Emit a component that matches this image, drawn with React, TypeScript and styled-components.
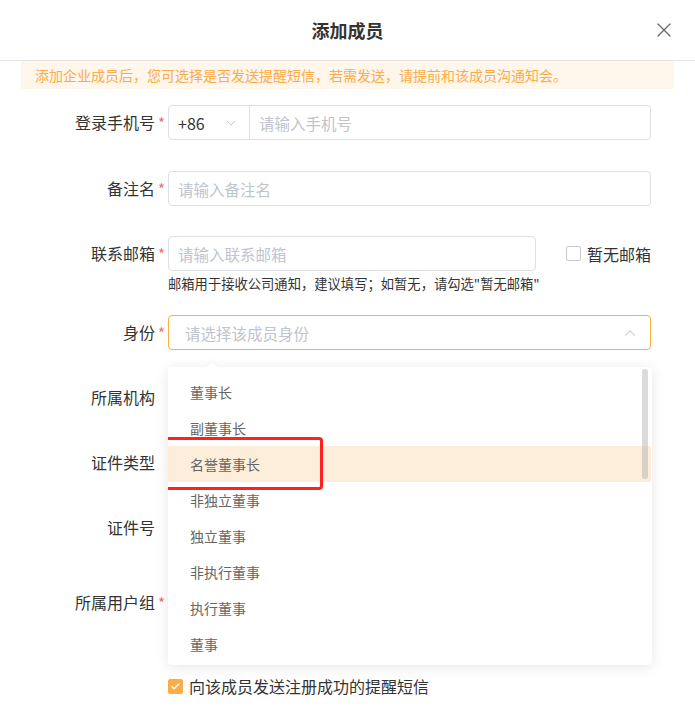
import React from "react";
import styled, { createGlobalStyle } from "styled-components";
import { Check, ChevronDown, ChevronUp, X } from "lucide-react";

const GlobalStyle = createGlobalStyle`
  * { box-sizing: border-box; }
  body {
    margin: 0;
    background: #fff;
    font-family: "Noto Sans CJK SC", "Noto Sans", sans-serif;
    color: #333;
  }
`;

const ROLES = [
  "董事长",
  "副董事长",
  "名誉董事长",
  "非独立董事",
  "独立董事",
  "非执行董事",
  "执行董事",
  "董事",
];

const App = () => {
  return (
    <Dialog>
      <GlobalStyle />
      <Header>
        <span />
        <Title>添加成员</Title>
        <CloseButton aria-label="close">
          <X size={24} strokeWidth={1.3} />
        </CloseButton>
      </Header>
      <Body>
        <Notice>
          添加企业成员后，您可选择是否发送提醒短信，若需发送，请提前和该成员沟通知会。
        </Notice>
        <Form>
          <FormItem $gap={31}>
            <Label $required>登录手机号</Label>
            <Control>
              <PhoneGroup>
                <AreaCode>
                  +86
                  <ChevronDown size={16} strokeWidth={1.4} color="#c0c4cc" />
                </AreaCode>
                <PhoneInput placeholder="请输入手机号" />
              </PhoneGroup>
            </Control>
          </FormItem>

          <FormItem>
            <Label $required>备注名</Label>
            <Control>
              <Input placeholder="请输入备注名" />
            </Control>
          </FormItem>

          <FormItem $gap={22}>
            <Label $required>联系邮箱</Label>
            <Control>
              <InlineRow>
                <Input placeholder="请输入联系邮箱" />
                <CheckLabel>
                  <CheckBox />
                  暂无邮箱
                </CheckLabel>
              </InlineRow>
              <Hint>邮箱用于接收公司通知，建议填写；如暂无，请勾选"暂无邮箱"</Hint>
            </Control>
          </FormItem>

          <FormItem>
            <Label $required>身份</Label>
            <Control>
              <Select $active>
                <Placeholder>请选择该成员身份</Placeholder>
                <ChevronUp size={18} strokeWidth={1.4} color="#c0c4cc" />
              </Select>
              <Dropdown>
                <Arrow />
                <OptionList>
                  {ROLES.map((role, i) => (
                    <Option key={role} $selected={i === 2}>
                      {role}
                      {i === 2 && <Marker />}
                    </Option>
                  ))}
                </OptionList>
                <ScrollThumb />
              </Dropdown>
            </Control>
          </FormItem>

          <FormItem>
            <Label>所属机构</Label>
            <Control>
              <Select />
            </Control>
          </FormItem>

          <FormItem>
            <Label>证件类型</Label>
            <Control>
              <Select />
            </Control>
          </FormItem>

          <FormItem $gap={18}>
            <Label>证件号</Label>
            <Control>
              <Input />
              <HintSpace />
            </Control>
          </FormItem>

          <FormItem $gap={34}>
            <Label $required>所属用户组</Label>
            <Control>
              <Select />
              <HintSpace />
            </Control>
          </FormItem>

          <FormItem>
            <LabelSpacer />
            <Control>
              <CheckLabel $first>
                <CheckBox $checked>
                  <Check size={11} strokeWidth={3} color="#fff" />
                </CheckBox>
                向该成员发送注册成功的提醒短信
              </CheckLabel>
            </Control>
          </FormItem>
        </Form>
      </Body>
    </Dialog>
  );
};

const Dialog = styled.div`
  width: 695px;
  min-height: 714px;
  background: #fff;
`;

const Header = styled.div`
  height: 61px;
  display: grid;
  grid-template-columns: 1fr auto 1fr;
  align-items: center;
  padding: 0 19px 1px;
  border-bottom: 1px solid #e4e4e4;
`;

const Title = styled.h1`
  margin: 0;
  font-size: 18px;
  font-weight: bold;
  color: #333;
  line-height: 24px;
`;

const CloseButton = styled.button`
  justify-self: end;
  display: flex;
  padding: 0;
  border: none;
  background: none;
  color: #666;
  cursor: pointer;
`;

const Body = styled.div`
  padding: 0 21px;
`;

const Notice = styled.div`
  height: 28px;
  padding-left: 14px;
  background: #fff6ec;
  color: #fbab48;
  font-size: 14px;
  line-height: 28px;
`;

const Form = styled.div`
  padding: 16px 23px 0 0;
`;

const FormItem = styled.div<{ $gap?: number }>`
  display: flex;
  align-items: flex-start;
  margin-bottom: ${(p) => p.$gap ?? 30}px;
`;

const Label = styled.label<{ $required?: boolean }>`
  position: relative;
  flex-shrink: 0;
  width: 134px;
  text-align: right;
  font-size: 16px;
  line-height: 35px;
  color: #333;

  &::after {
    content: ${(p) => (p.$required ? '"*"' : "none")};
    position: absolute;
    left: 100%;
    top: 3px;
    margin-left: 3px;
    line-height: 30px;
    color: #f56c6c;
    font-size: 15px;
  }
`;

const LabelSpacer = styled.div`
  flex-shrink: 0;
  width: 134px;
`;

const Control = styled.div`
  position: relative;
  flex: 1;
  margin-left: 13px;
`;

const Input = styled.input`
  display: block;
  width: 100%;
  height: 35px;
  padding: 0 9px;
  border: 1px solid #dcdfe6;
  border-radius: 4px;
  font-family: inherit;
  font-size: 15.5px;
  color: #333;
  outline: none;

  &::placeholder {
    color: #c0c4cc;
  }
`;

const PhoneGroup = styled.div`
  display: flex;
  height: 35px;
  border: 1px solid #dcdfe6;
  border-radius: 4px;
`;

const AreaCode = styled.div`
  width: 81px;
  display: flex;
  align-items: center;
  justify-content: space-between;
  padding: 0 10px 0 9px;
  border-right: 1px solid #dcdfe6;
  font-size: 16px;
  color: #333;
`;

const PhoneInput = styled(Input)`
  flex: 1;
  height: 33px;
  border: none;
`;

const InlineRow = styled.div`
  display: flex;
  align-items: center;
`;

const CheckLabel = styled.label<{ $first?: boolean }>`
  display: flex;
  align-items: center;
  flex-shrink: 0;
  gap: 6px;
  margin-left: ${(p) => (p.$first ? 0 : 30)}px;
  font-size: 16px;
  line-height: 20px;
  color: #333;
`;

const CheckBox = styled.span<{ $checked?: boolean }>`
  display: flex;
  align-items: center;
  justify-content: center;
  width: 15px;
  height: 15px;
  border-radius: 2px;
  border: 1px solid ${(p) => (p.$checked ? "#ffac45" : "#c8c9cc")};
  background: ${(p) => (p.$checked ? "#ffac45" : "#fff")};
`;

const Hint = styled.div`
  margin-top: 4px;
  font-size: 13.3px;
  line-height: 18px;
  color: #333;
  white-space: nowrap;
`;

const HintSpace = styled.div`
  height: 22px;
`;

const Select = styled.div<{ $active?: boolean }>`
  display: flex;
  align-items: center;
  justify-content: space-between;
  height: 35px;
  padding: 0 11px 0 16px;
  border: 1px solid ${(p) => (p.$active ? "#fbb040" : "#dcdfe6")};
  border-radius: 4px;
`;

const Placeholder = styled.span`
  font-size: 15.5px;
  color: #c0c4cc;
`;

const Dropdown = styled.div`
  position: absolute;
  z-index: 10;
  top: 52px;
  left: 0;
  right: -1px;
  height: 298px;
  background: #fff;
  border-radius: 4px;
  box-shadow: 0 2px 14px rgba(0, 0, 0, 0.1);
`;

const Arrow = styled.span`
  position: absolute;
  top: -4px;
  left: 40px;
  width: 8px;
  height: 8px;
  background: #fff;
  transform: rotate(45deg);
  box-shadow: -1px -1px 2px rgba(0, 0, 0, 0.04);
`;

const OptionList = styled.ul`
  height: 100%;
  margin: 0;
  padding: 7px 0 0;
  list-style: none;
  overflow: hidden;
`;

const Option = styled.li<{ $selected?: boolean }>`
  position: relative;
  height: 36px;
  padding-left: 22px;
  margin-right: 1px;
  font-size: 14px;
  line-height: 36px;
  color: #666;
  background: ${(p) => (p.$selected ? "#fdeddb" : "transparent")};
`;

const Marker = styled.span`
  position: absolute;
  left: -4px;
  top: -9px;
  width: 159px;
  height: 53px;
  border: 3px solid #ff2020;
  border-radius: 4px;
`;

const ScrollThumb = styled.span`
  position: absolute;
  top: 2px;
  right: 4px;
  width: 6px;
  height: 110px;
  border-radius: 3px;
  background: rgba(160, 160, 160, 0.38);
`;

export default App;
